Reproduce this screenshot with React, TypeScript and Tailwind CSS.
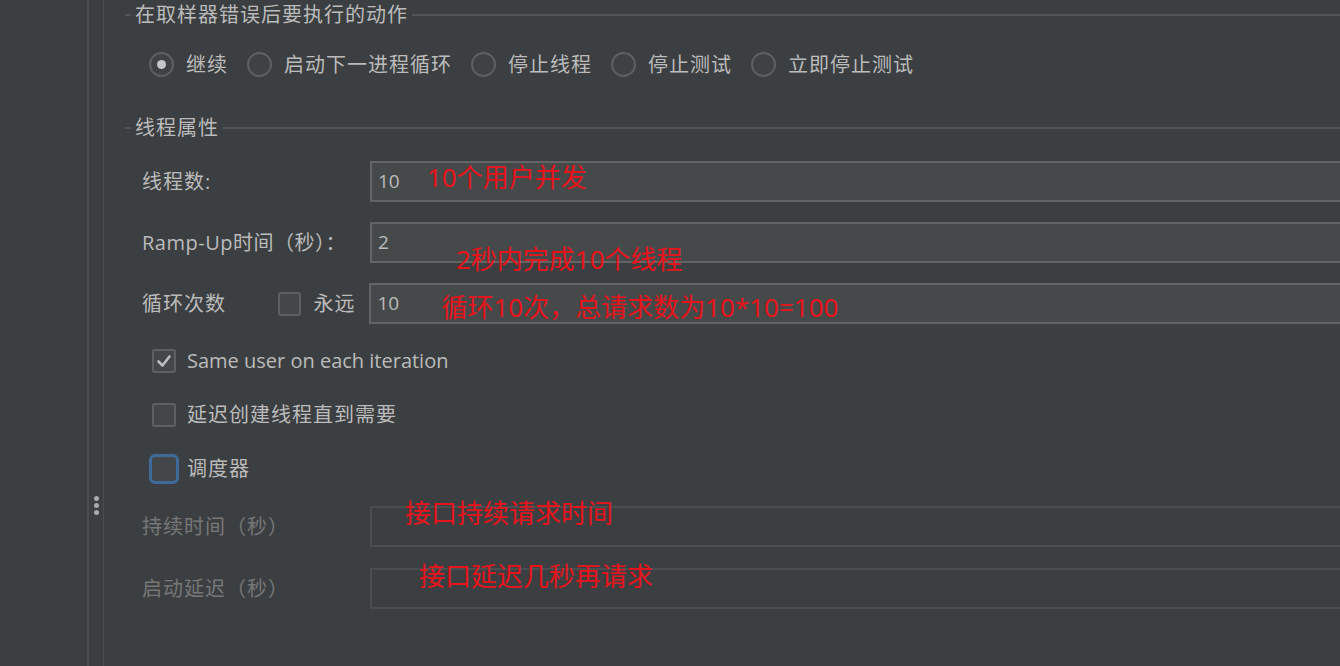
import React from 'react'

const font = { fontFamily: '"Open Sans", "Noto Sans CJK SC", sans-serif' }

function SectionTitle({ title }: { title: string }) {
  return (
    <div className="flex items-center h-[30px]">
      <div className="w-[6px] h-[2px] bg-[#515457]" />
      <span className="px-[4px] text-[20px] tracking-[1px] leading-none text-[#bbbbbb]">{title}</span>
      <div className="flex-1 h-[2px] bg-[#515457]" />
    </div>
  )
}

function Radio({ label, checked }: { label: string; checked?: boolean }) {
  return (
    <label className="flex items-center gap-[12px] mr-[19px]">
      <span className="w-[25px] h-[25px] rounded-full border-2 border-[#5e6060] bg-[#3f4244] flex items-center justify-center">
        {checked && <span className="w-[9px] h-[9px] rounded-full bg-[#c6c6c6]" />}
      </span>
      <span className="text-[20px] tracking-[1px] leading-none text-[#bbbbbb]">{label}</span>
    </label>
  )
}

function Checkbox({ label, checked, focused }: { label: string; checked?: boolean; focused?: boolean }) {
  return (
    <div className="flex items-center h-[30px]">
      <span
        className={
          focused
            ? 'w-[30px] h-[30px] rounded-[6px] border-[3px] border-[#3e6a99] bg-[#43474a] flex items-center justify-center -ml-[3px]'
            : 'w-[24px] h-[24px] rounded-[3px] border-2 border-[#5e6060] bg-[#43474a] flex items-center justify-center'
        }
      >
        {checked && (
          <svg width="16" height="16" viewBox="0 0 16 16">
            <path d="M2.5 8.5 L6.5 12.5 L13.5 3.5" fill="none" stroke="#bdbdbd" strokeWidth="2.6" strokeLinecap="round" strokeLinejoin="round" />
          </svg>
        )}
      </span>
      <span
        className={
          checked
            ? 'ml-[11px] text-[20px] leading-none text-[#bbbbbb]'
            : focused
              ? 'ml-[8px] text-[20px] tracking-[1px] leading-none text-[#bbbbbb]'
              : 'ml-[11px] text-[20px] tracking-[1px] leading-none text-[#bbbbbb]'
        }
      >
        {label}
      </span>
    </div>
  )
}

// red annotations drawn over the form
function Note({ text, left, top }: { text: string; left: number; top: number }) {
  return (
    <span
      className="absolute whitespace-nowrap text-[26px] leading-none text-[#e8141c]"
      style={{ left, top, fontFamily: '"Noto Sans", "Noto Sans CJK SC", sans-serif' }}
    >
      {text}
    </span>
  )
}

function Field({ value, disabled, note }: { value?: string; disabled?: boolean; note?: { text: string; left: number; top: number } }) {
  return (
    <div
      className={
        disabled
          ? 'relative h-[41px] w-[1000px] border-2 border-r-0 border-[#4b4e50] bg-[#3c3f41] flex items-center pl-[6px]'
          : 'relative h-[41px] w-[1000px] border-2 border-r-0 border-[#646464] bg-[#45494a] flex items-center pl-[6px]'
      }
    >
      {value && <span className="text-[19px] text-[#bbbbbb]">{value}</span>}
      {note && <Note {...note} />}
    </div>
  )
}

export default function App() {
  return (
    <div className="w-[1340px] h-[666px] bg-[#3c3f41] flex overflow-hidden" style={font}>
      <div className="w-[87px] shrink-0" />
      <div className="w-[2px] shrink-0 bg-[#4a4d4f]" />
      <div className="w-[14px] shrink-0 flex flex-col items-center pt-[496px] gap-[2px]">
        <span className="w-[5px] h-[5px] rounded-full bg-[#a9abad]" />
        <span className="w-[5px] h-[5px] rounded-full bg-[#a9abad]" />
        <span className="w-[5px] h-[5px] rounded-full bg-[#a9abad]" />
      </div>
      <div className="w-px shrink-0 bg-[#4a4d4f]" />
      <div className="flex-1 min-w-0 pl-[21px] pt-0">
        <SectionTitle title="在取样器错误后要执行的动作" />
        <div className="flex items-center pl-[24px] mt-[22px] h-[25px]">
          <Radio label="继续" checked />
          <Radio label="启动下一进程循环" />
          <Radio label="停止线程" />
          <Radio label="停止测试" />
          <Radio label="立即停止测试" />
        </div>
        <div className="mt-[36px]">
          <SectionTitle title="线程属性" />
        </div>

        <div className="pl-[17px] mt-[18px] flex flex-col">
          <div className="flex items-center">
            <span className="w-[228px] shrink-0 text-[20px] tracking-[1px] text-[#bbbbbb]">线程数:</span>
            <Field value="10" note={{ text: '10个用户并发', left: 55, top: 1 }} />
          </div>
          <div className="flex items-center mt-[20px]">
            <span className="w-[228px] shrink-0 text-[20px] tracking-[0.5px] text-[#bbbbbb]">Ramp-Up时间（秒）：</span>
            <Field value="2" note={{ text: '2秒内完成10个线程', left: 84, top: 22 }} />
          </div>
          <div className="flex items-center mt-[20px]">
            <span className="w-[136px] shrink-0 text-[20px] tracking-[1px] text-[#bbbbbb]">循环次数</span>
            <span className="w-[24px] h-[24px] rounded-[3px] border-2 border-[#5e6060] bg-[#43474a]" />
            <span className="ml-[12px] w-[56px] shrink-0 text-[20px] tracking-[1px] text-[#bbbbbb]">永远</span>
            <Field value="10" note={{ text: '循环10次，总请求数为10*10=100', left: 70, top: 9 }} />
          </div>

          <div className="flex flex-col pl-[10px] mt-[22px] gap-[24px]">
            <Checkbox label="Same user on each iteration" checked />
            <Checkbox label="延迟创建线程直到需要" />
            <Checkbox label="调度器" focused />
          </div>

          <div className="flex items-center mt-[22px]">
            <span className="w-[228px] shrink-0 text-[20px] tracking-[1px] text-[#777777]">持续时间（秒）</span>
            <Field disabled note={{ text: '接口持续请求时间', left: 33, top: -8 }} />
          </div>
          <div className="flex items-center mt-[21px]">
            <span className="w-[228px] shrink-0 text-[20px] tracking-[1px] text-[#777777]">启动延迟（秒）</span>
            <Field disabled note={{ text: '接口延迟几秒再请求', left: 47, top: -7 }} />
          </div>
        </div>
      </div>
    </div>
  )
}
